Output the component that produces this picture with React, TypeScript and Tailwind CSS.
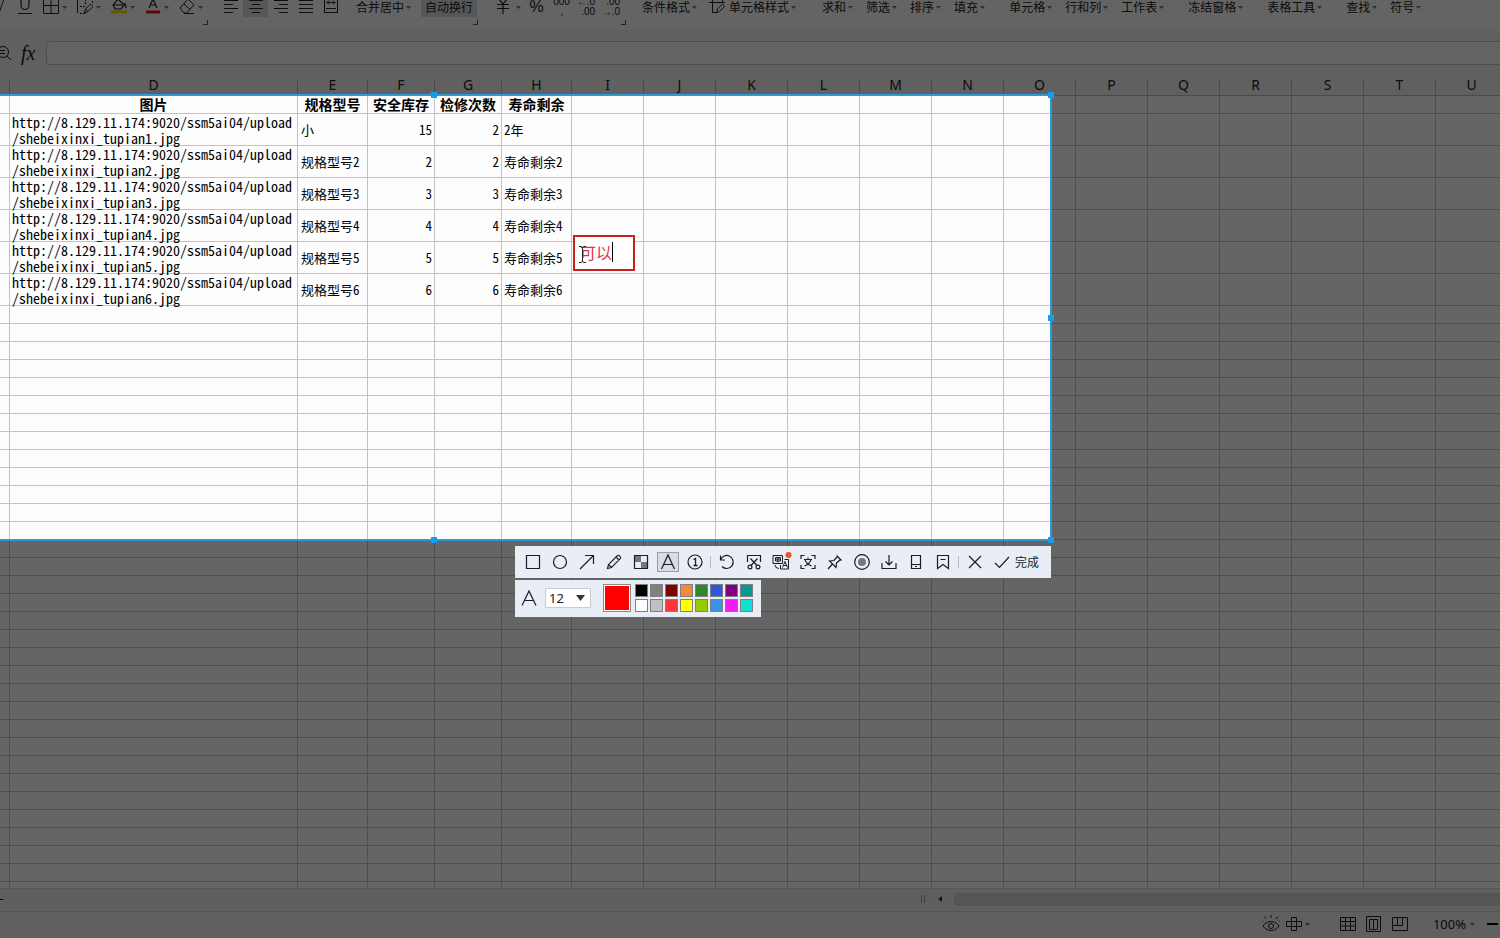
import React from "react";

type Kids = { children: React.ReactNode };

const Svg = ({ children, size = 16 }: Kids & { size?: number }) => (
  <svg
    width={size}
    height={size}
    viewBox={`0 0 ${size} ${size}`}
    fill="none"
    stroke="currentColor"
    strokeWidth="1"
    className="shrink-0"
    aria-hidden="true"
  >
    {children}
  </svg>
);

const Caret = () => (
  <svg width="5" height="3" viewBox="0 0 5 3" fill="#777" className="shrink-0" aria-hidden="true">
    <path d="M0 0h5L2.500 3z" />
  </svg>
);

const IconDrop = ({ label, children }: Kids & { label: string }) => (
  <button aria-label={label} className="flex items-center gap-[3px]">
    <Svg>{children}</Svg>
    <Caret />
  </button>
);

const TextDrop = ({ text, icon }: { text: string; icon?: React.ReactNode }) => (
  <button className="flex items-center gap-[2px] whitespace-nowrap">
    {icon && <span className="pr-[2px]">{icon}</span>}
    {text}
    <Caret />
  </button>
);

const alignIcons: [string, string, boolean][] = [
  ["左对齐", "M1 1.500h14M1 5.500h9M1 9.500h14M1 13.500h9", false],
  ["居中", "M1 1.500h14M4 5.500h8M1 9.500h14M4 13.500h8", true],
  ["右对齐", "M1 1.500h14M6 5.500h9M1 9.500h14M6 13.500h9", false],
  ["两端对齐", "M1 1.500h14M1 5.500h14M1 9.500h14M1 13.500h14", false],
  ["分散对齐", "M1.500 0v14M14.500 0v14M4 3.500h8M6 1.500l-2 2 2 2M10 1.500l2 2-2 2M3 9.500h10M1 13.500h14", false],
];

const Corner = () => (
  <svg width="5" height="5" viewBox="0 0 5 5" fill="none" stroke="#555" className="mt-[3px] justify-self-end" aria-hidden="true">
    <path d="M4.500 0v4.500H0" />
  </svg>
);

function Ribbon() {
  return (
    <header className="h-[30px] shrink-0 overflow-hidden bg-[#fbf9fb] text-xs text-[#222]">
      <div className="-mt-[3px] flex h-5 items-center whitespace-nowrap">
        <button aria-label="倾斜" className="w-[17px]">
          <Svg>
            <path d="M-1 14L4 0" />
          </Svg>
        </button>
        <button aria-label="下划线" className="mr-[10px]">
          <Svg>
            <path d="M4 -1v7.500a4 4 0 0 0 8 0V-1" strokeWidth="1.2" />
            <path d="M1 14.500h14" />
          </Svg>
        </button>
        <div className="flex gap-[10px]">
          <IconDrop label="边框">
            <path d="M.5-1v15.500h15V-1M8-1v15.500M.5 6.500h15" />
          </IconDrop>
          <IconDrop label="绘图边框">
            <path d="M.5-1v15" />
            <path d="M3 14.500h5M3 7.500h6M8.500 0v5M15.500-1v5" strokeDasharray="2 1" />
            <path d="M7.500 14l1-4 5-5 2.500 2.500-5 5zM8.500 10l2.500 2.500" />
          </IconDrop>
          <IconDrop label="填充颜色">
            <path d="M3 6h10l-3 4H4L2 6l5-6 5 5M13 4c2 2 3 4 1 5" strokeWidth="1.200" />
            <path d="M0 13h16" stroke="#e8e400" strokeWidth="3" />
          </IconDrop>
          <IconDrop label="字体颜色">
            <path d="M4 9L8 0l4 9M5.500 6h5" strokeWidth="1.200" />
            <path d="M1 13h14" stroke="#f20d1d" strokeWidth="3" />
          </IconDrop>
          <IconDrop label="清除">
            <path d="M1 9l8-9 6 6-7.500 8H5zM5 5l6 5.500M5 14.500h10" />
          </IconDrop>
        </div>
        <div className="ml-[15px] flex">
          {alignIcons.map(([label, d, on]) => (
            <button
              key={label}
              aria-label={label}
              className={on ? "flex h-5 w-[25px] items-center justify-center bg-[#dcdadd]" : "flex h-5 w-[25px] items-center justify-center"}
            >
              <Svg>
                <path d={d} />
              </Svg>
            </button>
          ))}
        </div>
        <div className="ml-[13px] flex items-center gap-[10px]">
          <TextDrop text="合并居中" />
          <button className="h-5 bg-[#dcdadd] px-1">自动换行</button>
        </div>
        <button aria-label="货币" className="ml-[18px] flex items-center gap-[5px]">
          <Svg>
            <path d="M4 0l4 5 4-5M2 5.500h12M2 9.500h12M8 5v10" strokeWidth="1.200" />
          </Svg>
          <Caret />
        </button>
        <div className="ml-[3px] flex h-5 items-center font-['Liberation_Sans',sans-serif] text-[10px] leading-[10px]">
          <button className="w-[25px] text-base leading-4">%</button>
          <button className="w-[25px]">
            000
            <br />,
          </button>
          <button className="w-[25px] pr-1 text-right">
            ←.0
            <br />
            .00
          </button>
          <button className="w-[25px] pr-1 text-right">
            .00
            <br />
            →.0
          </button>
        </div>
        <div className="ml-[18px] flex gap-3">
          <TextDrop text="条件格式" />
          <TextDrop
            text="单元格样式"
            icon={
              <Svg>
                <path d="M0 3.500h16M3.500 0v14M3 13.500h4M13.500 0v3M7.500 14l1-4 5-5 2 2.500-5 5z" />
              </Svg>
            }
          />
        </div>
        <div className="ml-[26px] flex gap-6">
          {[
            ["求和", "筛选", "排序", "填充"],
            ["单元格", "行和列", "工作表"],
            ["冻结窗格"],
            ["表格工具"],
            ["查找", "符号"],
          ].map((group) => (
            <div key={group[0]} className="flex gap-[13px]">
              {group.map((t) => (
                <TextDrop key={t} text={t} />
              ))}
            </div>
          ))}
        </div>
      </div>
      <div className="grid grid-cols-[208px_270px_148px]">
        <Corner />
        <Corner />
        <Corner />
      </div>
    </header>
  );
}

function FormulaBar() {
  return (
    <div className="flex h-[45px] shrink-0 items-center bg-[#eeefee] text-[#222]">
      <button aria-label="缩小" className="w-[21px]">
        <Svg>
          <circle cx="3" cy="7" r="5.500" />
          <path d="M0 5.500h5M0 8.500h5M7 11l4 4" />
        </Svg>
      </button>
      <button className="w-[25px] text-left font-['Liberation_Serif',serif] text-xl leading-6 italic">fx</button>
      <input
        aria-label="编辑栏"
        className="h-6 min-w-0 flex-1 rounded-l-sm border border-r-0 border-[#c0c4c4] bg-[#f8fbfa] outline-none"
      />
    </div>
  );
}

const letters = ["", "D", "E", "F", "G", "H", "I", "J", "K", "L", "M", "N", "O", "P", "Q", "R", "S", "T", "U"];
const records = [
  ["小", 15, 2, "2年"],
  ["规格型号2", 2, 2, "寿命剩余2"],
  ["规格型号3", 3, 3, "寿命剩余3"],
  ["规格型号4", 4, 4, "寿命剩余4"],
  ["规格型号5", 5, 5, "寿命剩余5"],
  ["规格型号6", 6, 6, "寿命剩余6"],
];
const rest = letters.slice(6);
const cell = "border-r border-b border-[#bfc3cd] p-0";

function Sheet() {
  return (
    <main className="min-h-0 flex-1 overflow-hidden bg-[#efefef] pt-[5px]">
      <table className="w-[1508px] table-fixed border-separate border-spacing-0 bg-[#fdfdfe] text-[13px] text-black">
        <colgroup>
          <col className="w-[10px]" />
          <col className="w-[288px]" />
          <col className="w-[70px]" />
          <col className="w-[67px]" />
          <col className="w-[67px]" />
          <col className="w-[70px]" />
          {rest.map((l) => (
            <col key={l} className="w-[72px]" />
          ))}
        </colgroup>
        <thead>
          <tr className="h-4 bg-[#efefef]">
            {letters.map((l) => (
              <th
                key={l}
                className="border-r border-b border-[#b4b8bc] p-0 align-top font-['Noto_Sans',sans-serif] text-sm leading-[9px] font-normal text-[#222]"
              >
                {l}
              </th>
            ))}
          </tr>
        </thead>
        <tbody>
          <tr className="h-[18px] text-sm leading-[17px] font-bold">
            <td className={cell} />
            {["图片", "规格型号", "安全库存", "检修次数", "寿命剩余"].map((t) => (
              <td key={t} className="border-r border-b border-[#bfc3cd] p-0 text-center">
                {t}
              </td>
            ))}
            {rest.map((l) => (
              <td key={l} className={cell} />
            ))}
          </tr>
          {records.map(([model, stock, repairs, life], i) => (
            <tr key={i} className="h-8 font-['Noto_Sans_Mono_CJK_SC','Noto_Sans_CJK_SC',monospace]">
              <td className={cell} />
              <td className="border-r border-b border-[#bfc3cd] p-0 pl-[2px] whitespace-nowrap">
                <div className="h-[31px] text-sm leading-4">
                  http://8.129.11.174:9020/ssm5ai04/upload
                  <br />
                  /shebeixinxi_tupian{i + 1}.jpg
                </div>
              </td>
              <td className="border-r border-b border-[#bfc3cd] p-0 pl-[3px] whitespace-nowrap">{model}</td>
              <td className="border-r border-b border-[#bfc3cd] p-0 pr-[2px] text-right">{stock}</td>
              <td className="border-r border-b border-[#bfc3cd] p-0 pr-[2px] text-right">{repairs}</td>
              <td className="border-r border-b border-[#bfc3cd] p-0 pl-[2px] whitespace-nowrap">{life}</td>
              {rest.map((l) => (
                <td key={l} className={cell} />
              ))}
            </tr>
          ))}
          {Array.from({ length: 33 }, (_, i) => (
            <tr key={i} className="h-[18px]">
              {letters.map((l) => (
                <td key={l} className={cell} />
              ))}
            </tr>
          ))}
        </tbody>
      </table>
    </main>
  );
}

function BottomBars() {
  return (
    <footer className="shrink-0 text-[#222]">
      <div className="flex h-[23px] items-center border-t border-[#d4d6d6] bg-[#ebedec] pb-[2px]">
        <span className="h-px w-[3px] bg-black" />
        <div className="ml-auto flex w-[579px] items-center">
          <span className="h-2 w-1 border-x border-[#a0a0a0]" />
          <svg width="5" height="6" viewBox="0 0 5 6" className="ml-3 shrink-0" aria-hidden="true">
            <path d="M5 0v6L1 3z" fill="#333" />
          </svg>
          <div className="ml-3 h-[13px] flex-1 rounded-l-sm bg-[#d2d7d7]" />
        </div>
      </div>
      <div className="flex h-[27px] items-center justify-end border-t border-[#cfd2d4] bg-[#f0f0f3] pr-[2px] pb-[2px]">
        <button aria-label="护眼模式">
          <Svg size={18}>
            <path d="M1 11c4-6 12-6 16 0-4 6-12 6-16 0zM9 3V0M4 4L2.500 1.500M14 4l1.500-2.500M1 6.500L0 5.500M17 6.500l1-1" />
            <circle cx="9" cy="11" r="2.500" />
          </Svg>
        </button>
        <button aria-label="阅读模式" className="ml-[6px] flex items-center gap-[3px]">
          <Svg>
            <path d="M5.500 1.500h5v13h-5zM.5 5.500h15v5H.5z" />
          </Svg>
          <Caret />
        </button>
        <div className="ml-[30px] flex gap-[10px]">
          <button aria-label="普通视图">
            <Svg>
              <path d="M.5 1.500h15v13H.5zM.5 5.500h15M.5 10h15M5.500 1.500v13M10.500 1.500v13" />
            </Svg>
          </button>
          <button aria-label="页面布局">
            <Svg>
              <path d="M.5.500h14v15H.500zM3.500 3.500h8v10h-8zM7.500 3.500v10" />
            </Svg>
          </button>
          <button aria-label="分页预览">
            <Svg>
              <path d="M.5 1.500h15v13H.5zM5.500 1.500v8M10.500 1.500v8M.5 9.500h10" />
            </Svg>
          </button>
        </div>
        <button className="ml-[25px] flex items-center gap-1 font-['Noto_Sans',sans-serif] text-[13px] leading-4">
          100%
          <Caret />
        </button>
        <button aria-label="缩小显示比例" className="ml-3 h-[2px] w-[11px] bg-black" />
      </div>
    </footer>
  );
}

const handlePlaces = [
  "top-[-4px] left-1/2 -translate-x-1/2",
  "top-[-4px] right-[-4px]",
  "top-1/2 right-[-4px] -translate-y-1/2",
  "right-[-4px] bottom-[-4px]",
  "bottom-[-4px] left-1/2 -translate-x-1/2",
];

function Capture() {
  return (
    <div className="pointer-events-none absolute top-[94px] left-[-185px] h-[447px] w-[1237px] border-2 border-[#2b9bd8] shadow-[0_0_0_4000px_rgba(0,0,0,0.6)]">
      {handlePlaces.map((p) => (
        <span key={p} className={`absolute size-[6px] bg-[#169fe8] ${p}`} />
      ))}
    </div>
  );
}

function Note() {
  return (
    <div className="absolute top-[235px] left-[573px] flex h-9 w-[62px] items-center border-2 border-[#c8201f] bg-white pb-[2px] pl-[5px]">
      <input
        aria-label="文字批注"
        defaultValue="可以"
        className="w-8 bg-transparent p-0 text-base leading-5 text-[#dc3545] outline-none"
      />
      <span className="h-5 w-px shrink-0 bg-black" />
      <svg width="7" height="17" viewBox="0 0 7 17" fill="none" stroke="#222" className="absolute top-[9px] left-1" aria-hidden="true">
        <path d="M0 .5h2l1.500 1 1.500-1h2M3.500 1v15M0 16.500h2l1.500-1 1.500 1h2" />
      </svg>
    </div>
  );
}

const drawTools: [string, React.ReactNode][] = [
  ["矩形", <path d="M1.500 1.500h13v13h-13z" />],
  ["椭圆", <circle cx="8" cy="8" r="6.500" />],
  ["箭头", <path d="M1 15L14.500 1.500M6 1.500h8.500V10" />],
  ["画笔", <path d="M1.500 14.500l1-4 9-9q.8-.6 1.500 0l1.500 1.500q.6.700 0 1.500l-9 9zM10 3l3 3M2.500 10.500l3 3" strokeWidth="1.100" />],
  [
    "马赛克",
    <>
      <path d="M8 2h6v6H8zM2 8h6v6H2z" fill="#e9edf5" stroke="none" />
      <path d="M2 2h6v6H2zM8 8h6v6H8z" fill="#777" stroke="none" />
      <path d="M1.500 1.500h13v13h-13z" />
    </>,
  ],
  ["文字", <path d="M1.500 15L8 1l6.500 14M4 10.500h8" />],
  [
    "序号",
    <>
      <circle cx="8" cy="8" r="7" />
      <path d="M6.500 5.500L8.500 4.500v7M6.500 11.500h4" strokeWidth="1.300" />
    </>,
  ],
];

const actionTools: [string, React.ReactNode][] = [
  ["撤销", <path d="M1.500 1.500v4.500h4.500M1.500 6A6.500 6.500 0 1 1 3 12.500" />],
  [
    "截图",
    <>
      <path d="M1.500 8V1.500h13V8M4.500 4.500l6.500 7M11.500 4.500L5 11.500" />
      <circle cx="4" cy="13" r="1.900" />
      <circle cx="12" cy="13" r="1.900" />
    </>,
  ],
  [
    "翻译",
    <>
      <path d="M0 1.500h9.500v8H0zM2.500 3.500h5v3.500h-5zM5 3.500v5M2.500 5.200h5" strokeWidth="1" />
      <path d="M11.500 5.500h4v9.500H7.500v-4M9.500 13.500l2.500-6 2.500 6M10.500 11.500h3M2 11l1 2.500 3 1" strokeWidth="1" />
      <circle cx="15.500" cy="1" r="3" fill="#e5542c" stroke="none" />
    </>,
  ],
  ["文字识别", <path d="M1 5V1.500h3.500M11.500 1.500H15V5M15 11v3.500h-3.500M4.500 14.500H1V11M4 5.500h8M8 3.500v2M5 6q2 4.500 6.500 6M11 6q-2 4.500-6.500 6" />],
  ["固定", <path d="M9.500 1.500l5 5M10.500 2.500L7 6.500 2.500 7 9 13.500 9.500 9l4-3.500M5.500 10L1 15" />],
  [
    "录屏",
    <>
      <circle cx="8" cy="8" r="7.300" />
      <circle cx="8" cy="8" r="4" fill="#777" stroke="none" />
    </>,
  ],
  ["下载", <path d="M8 1v10M4.500 7.500L8 11l3.500-3.500M1 9v5.500h14V9" />],
  ["手机", <path d="M3.500 1.500h9v13h-9zM3.500 10.500h9M7 12.500h2" />],
  ["收藏", <path d="M2.500 1.500h11v13L8 10.500l-5.500 4zM5.500 5.500h5" />],
];

const ToolButton = ({ label, active, children }: Kids & { label: string; active?: boolean }) => (
  <button aria-label={label} className="flex h-8 w-[27px] items-center justify-center">
    <span
      className={
        active
          ? "flex h-5 w-[22px] items-center justify-center border border-[#9a9da5] bg-[#d9dce4]"
          : "flex h-5 w-[22px] items-center justify-center"
      }
    >
      <svg width="16" height="16" viewBox="0 0 16 16" fill="none" stroke="currentColor" strokeWidth="1.200" className="shrink-0 overflow-visible" aria-hidden="true">
        {children}
      </svg>
    </span>
  </button>
);

const Divider = () => (
  <span className="flex w-[5px] justify-center">
    <span className="h-3 w-px bg-[#b9bdc6]" />
  </span>
);

const palette: [string, string][] = [
  ["黑", "bg-black"],
  ["灰", "bg-[#808080]"],
  ["深红", "bg-[#800000]"],
  ["橙", "bg-[#f38a38]"],
  ["绿", "bg-[#2f8531]"],
  ["蓝", "bg-[#3057d9]"],
  ["紫", "bg-[#800080]"],
  ["青", "bg-[#0b9890]"],
  ["白", "bg-white"],
  ["浅灰", "bg-[#c0c0c0]"],
  ["红", "bg-[#fb3838]"],
  ["黄", "bg-[#ffff00]"],
  ["黄绿", "bg-[#99cc00]"],
  ["浅蓝", "bg-[#3894e4]"],
  ["洋红", "bg-[#f31bf3]"],
  ["浅青", "bg-[#16dcd2]"],
];

function Toolbars() {
  return (
    <div className="absolute top-[546px] left-[515px] flex flex-col items-start gap-[2px] text-[#1c1c22]">
      <div className="flex h-8 items-center bg-[#e9edf5] pr-3 pl-1">
        {drawTools.map(([label, icon]) => (
          <ToolButton key={label} label={label} active={label === "文字"}>
            {icon}
          </ToolButton>
        ))}
        <Divider />
        {actionTools.map(([label, icon]) => (
          <ToolButton key={label} label={label}>
            {icon}
          </ToolButton>
        ))}
        <Divider />
        <ToolButton label="取消">
          <path d="M2 2l12 12M14 2L2 14" />
        </ToolButton>
        <button className="ml-[6px] flex items-center gap-[5px] text-xs whitespace-nowrap">
          <Svg>
            <path d="M1 9l4.500 4.500L15 3" strokeWidth="1.200" />
          </Svg>
          完成
        </button>
      </div>
      <div className="flex h-[37px] items-center bg-[#e9edf5] pr-2 pb-[2px] pl-[6px]">
        <Svg>
          <path d="M1 15.500L8 1l7 14.500M4 10.500h8" strokeWidth="1.200" />
        </Svg>
        <div className="relative ml-2 flex">
          <select
            aria-label="字号"
            className="h-5 w-[46px] appearance-none border border-[#c9ccd4] bg-white pl-[3px] font-['Noto_Sans',sans-serif] text-[13px] leading-4 outline-none"
          >
            <option>12</option>
          </select>
          <svg width="9" height="6" viewBox="0 0 9 6" className="pointer-events-none absolute top-[7px] right-[6px]" aria-hidden="true">
            <path d="M0 0h9L4.500 6z" fill="#333" />
          </svg>
        </div>
        <button aria-label="当前颜色" className="ml-3 size-7 border border-[#8a8a8a] bg-white p-px">
          <span className="block size-full bg-[#ff0000]" />
        </button>
        <div className="ml-1 grid grid-cols-8 gap-[2px]">
          {palette.map(([label, bg]) => (
            <button key={label} aria-label={label} className={`size-[13px] border border-[#808080] ${bg}`} />
          ))}
        </div>
      </div>
    </div>
  );
}

export default function App() {
  return (
    <div className="relative flex h-screen flex-col overflow-hidden bg-white font-['Noto_Sans_CJK_SC',sans-serif]">
      <Ribbon />
      <FormulaBar />
      <Sheet />
      <BottomBars />
      <Capture />
      <Note />
      <Toolbars />
    </div>
  );
}
